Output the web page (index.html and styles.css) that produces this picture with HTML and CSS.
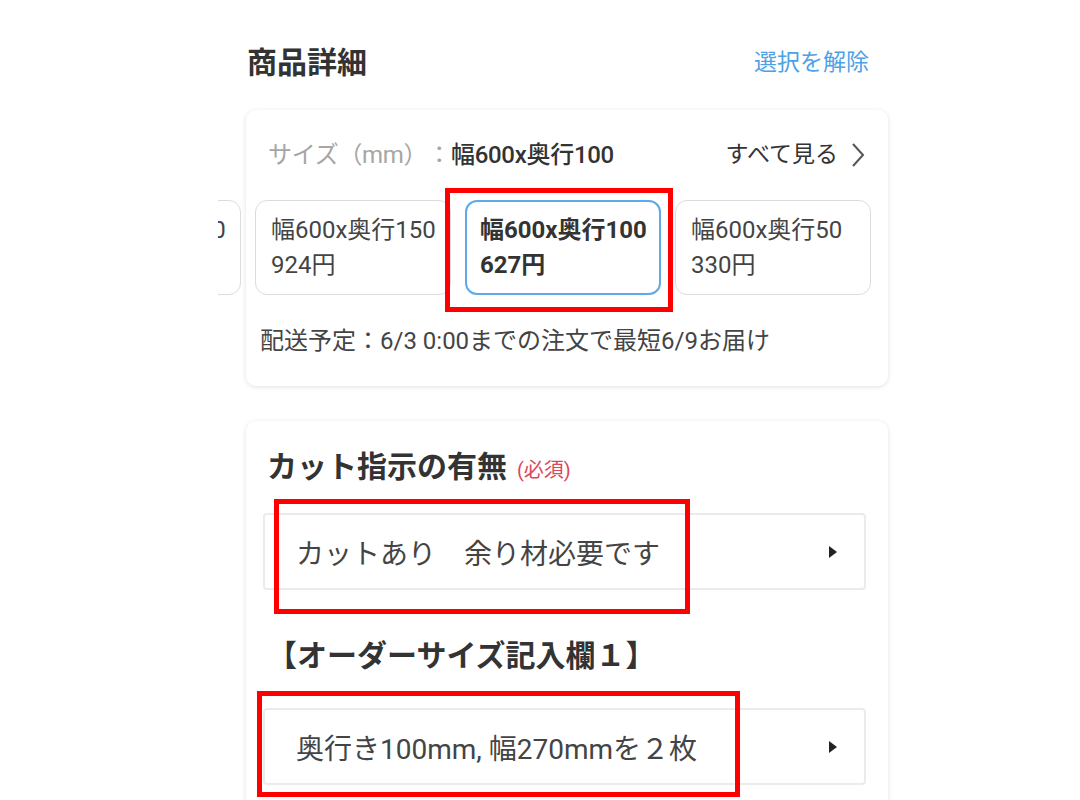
FILE: index.html
```html
<!DOCTYPE html>
<html lang="ja">
<head>
    <meta charset="UTF-8">
    <meta name="viewport" content="width=device-width, initial-scale=1.0">
    <title>商品詳細</title>
    <link rel="stylesheet" href="styles.css">
</head>
<body>
    <main class="page">
        <header class="top">
            <h1>商品詳細</h1>
            <a href="#" class="clear">選択を解除</a>
        </header>

        <section class="card variant">
            <div class="size-row">
                <p class="size-label">サイズ（mm）：<b>幅600x奥行100</b></p>
                <a href="#" class="see-all">すべて見る
                    <svg width="16" height="28" viewBox="0 0 16 28"><path d="M3 3 L13 14 L3 25" fill="none" stroke="#555" stroke-width="2"/></svg>
                </a>
            </div>

            <div class="options">
                <div class="option first">幅600x奥行200<br>1,190円</div>
                <div class="option">幅600x奥行150<br>924円</div>
                <div class="option selected">幅600x奥行100<br>627円</div>
                <div class="option">幅600x奥行50<br>330円</div>
            </div>

            <p class="delivery">配送予定：6/3 0:00までの注文で最短6/9お届け</p>
        </section>

        <section class="card form">
            <h2>カット指示の有無<span class="required">(必須)</span></h2>
            <div class="select">
                <span>カットあり　余り材必要です</span>
                <i class="arrow"></i>
            </div>

            <h2>【オーダーサイズ記入欄１】</h2>
            <div class="select">
                <span>奥行き100mm, 幅270mmを２枚</span>
                <i class="arrow"></i>
            </div>
        </section>
    </main>

    <!-- annotation marks -->
    <div class="mark mark-1"></div>
    <div class="mark mark-2"></div>
    <div class="mark mark-3"></div>
</body>
</html>
```

FILE: styles.css
```css
body {
    font-family: Roboto, "Noto Sans CJK JP", sans-serif;
    text-spacing-trim: space-all;
    background: #fff;
    color: #333;
    margin: 0;
    padding: 0;
    overflow: hidden;
    height: 800px;
}

.page {
    width: 642px;
    margin-left: 246px;
}

.top {
    display: flex;
    justify-content: space-between;
    align-items: center;
    height: 44px;
    padding: 38px 19px 0 1px;
}

.top h1 {
    margin: 0;
    font-size: 30px;
    font-weight: 700;
    color: #333;
}

.clear {
    color: #4da1e6;
    font-size: 23px;
    text-decoration: none;
}

.card {
    background: #fff;
    border-radius: 10px;
    box-shadow: 0 1px 5px rgba(0, 0, 0, 0.12);
}

.variant {
    margin-top: 28px;
    padding-bottom: 30px;
}

.size-row {
    display: flex;
    justify-content: space-between;
    align-items: center;
    padding: 30px 22px 0 22px;
    line-height: 30px;
}

.size-label {
    margin: 0;
    font-size: 24px;
    letter-spacing: -0.3px;
    color: #a6a6a6;
}

.size-label b {
    color: #333;
    font-weight: 500;
}

.see-all {
    display: flex;
    align-items: center;
    gap: 12px;
    font-size: 23px;
    color: #333;
    text-decoration: none;
}

.options {
    display: flex;
    gap: 14px;
    margin: 30px 8px 0 -28px;
    overflow: hidden;
}

.option {
    flex: 0 0 196px;
    box-sizing: border-box;
    height: 95px;
    padding: 12px 0 0 15px;
    border: 1px solid #dcdcdc;
    border-radius: 12px;
    font-size: 24px;
    line-height: 35px;
    color: #444;
    white-space: nowrap;
}

.option.first {
    margin-left: -173px;
}

.option.selected {
    border: 2px solid #5ea9ea;
    padding: 11px 0 0 13px;
    font-weight: 700;
    color: #333;
}

.delivery {
    margin: 31px 0 0 14px;
    font-size: 24px;
    line-height: 30px;
    color: #444;
}

.form {
    margin-top: 35px;
    padding: 26px 22px 30px 17px;
}

.form h2 {
    margin: 0 0 23px 4px;
    font-size: 30px;
    font-weight: 700;
    line-height: 40px;
    color: #333;
}

.form h2 + .select + h2 {
    margin-top: 46px;
    margin-bottom: 32px;
}

.required {
    margin-left: 10px;
    font-size: 20px;
    font-weight: 400;
    color: #e0455a;
}

.select {
    display: flex;
    justify-content: space-between;
    align-items: center;
    height: 77px;
    box-sizing: border-box;
    padding: 0 27px 0 31px;
    border: 2px solid #ebebeb;
    border-radius: 4px;
    font-size: 28px;
    color: #444;
}

.arrow {
    width: 0;
    height: 0;
    border-top: 6.5px solid transparent;
    border-bottom: 6.5px solid transparent;
    border-left: 8px solid #222;
}

.mark {
    position: absolute;
    border: 5px solid #ff0000;
    box-sizing: border-box;
}

.mark-1 {
    left: 445px;
    top: 188px;
    width: 228px;
    height: 124px;
}

.mark-2 {
    left: 274px;
    top: 499px;
    width: 416px;
    height: 115px;
}

.mark-3 {
    left: 257px;
    top: 691px;
    width: 483px;
    height: 106px;
}
```
